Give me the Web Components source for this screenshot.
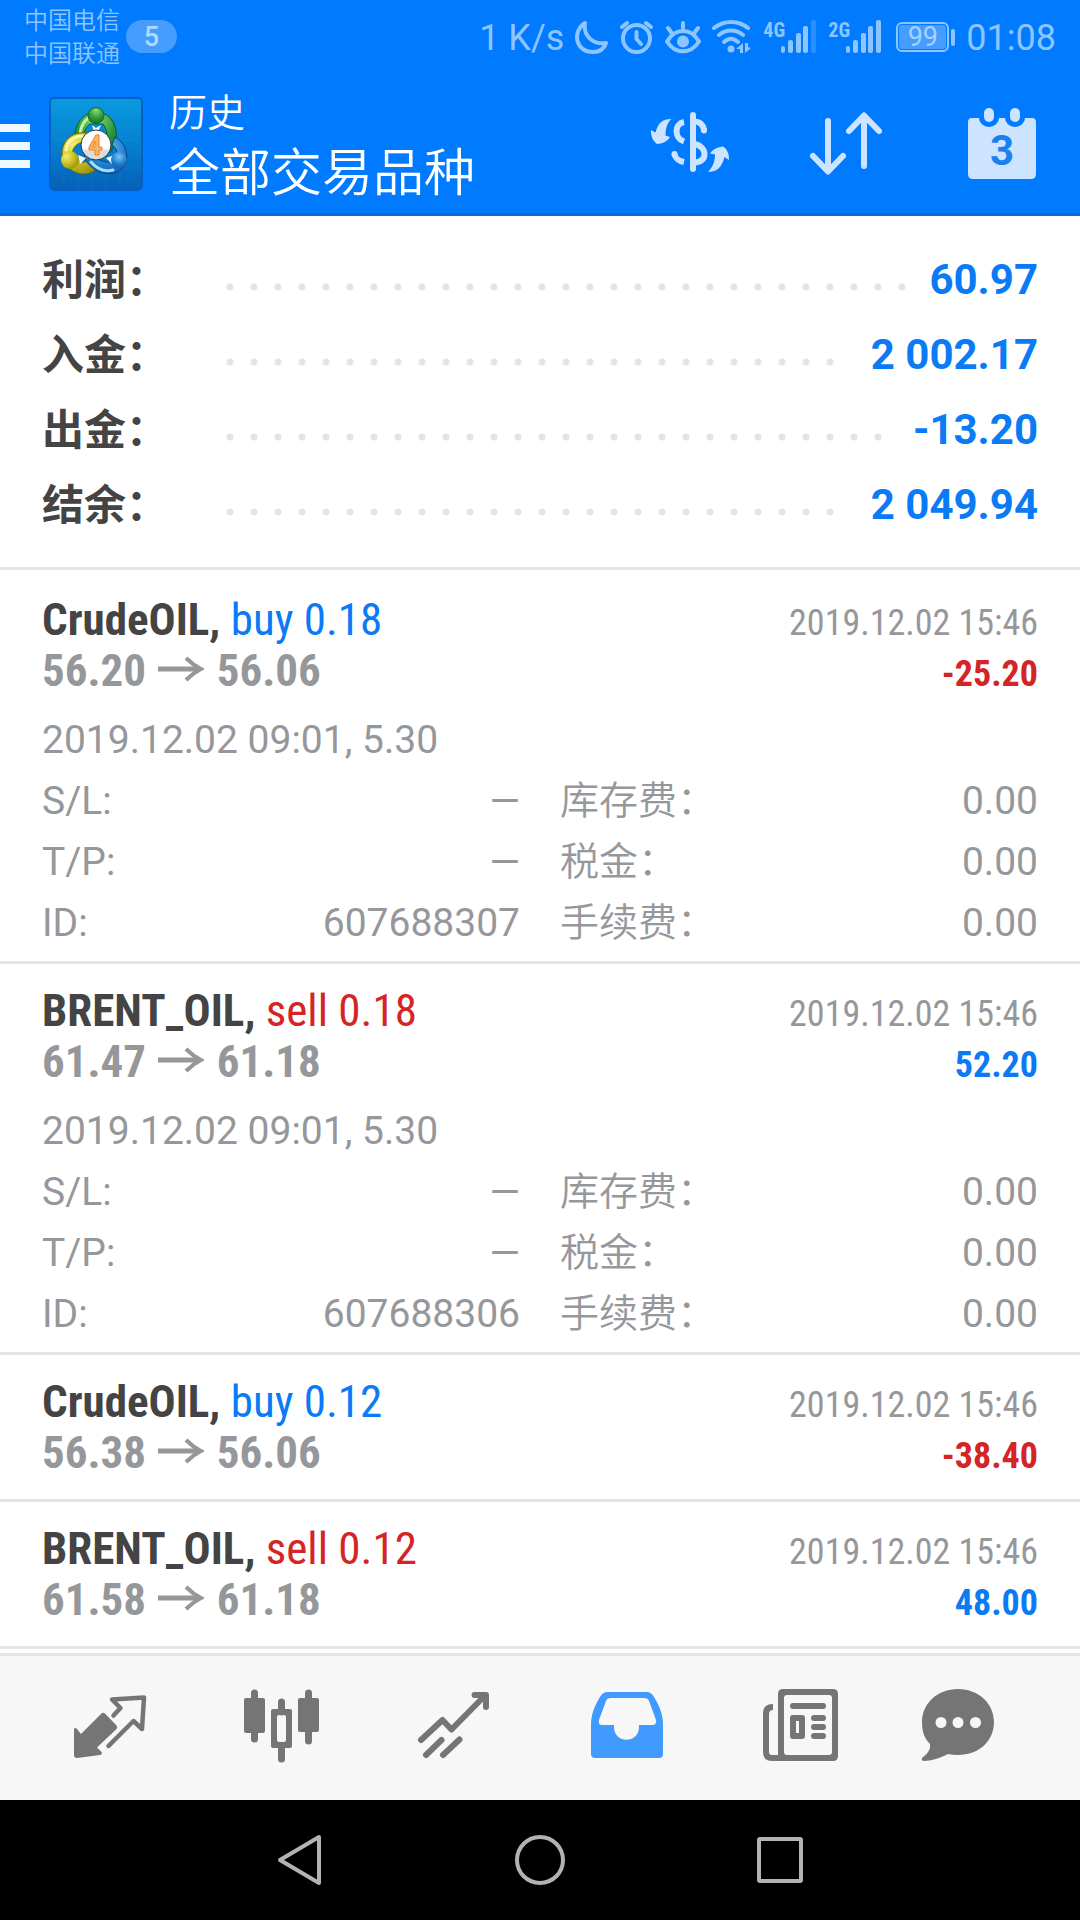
<!DOCTYPE html>
<html lang="zh-CN">
<head>
<meta charset="utf-8">
<meta name="viewport" content="width=device-width, initial-scale=1">
<title>历史</title>
<style>
  body {
    margin: 0;
    background: #fff;
    font-family: Roboto, "Noto Sans CJK SC", sans-serif;
    --blue: #007aff;
    --ink: #444;
    --muted: #96979b;
    --rule: #e4e4e4;
    --profit: #0a7af5;
    --loss: #d42426;
    --narrow: "Roboto Condensed", "Liberation Sans Narrow", Roboto, sans-serif;
  }
</style>
</head>
<body>
<history-app></history-app>

<script>
function define(name, html, setup) {
  const template = document.createElement('template');
  template.innerHTML = html;
  customElements.define(name, class extends HTMLElement {
    connectedCallback() {
      if (this.shadowRoot) return;
      const root = this.attachShadow({ mode: 'open' });
      root.append(template.content.cloneNode(true));
      if (setup) setup(this, root);
    }
  });
}

/* Copies attributes of the host into the elements marked with data-bind. */
function bind(host, root) {
  root.querySelectorAll('[data-bind]').forEach(el => {
    el.textContent = host.getAttribute(el.dataset.bind) || '';
  });
}

define('signal-meter', `
  <style>
    :host { display: flex; align-items: flex-start; color: inherit; }
    span { font: 700 20px/20px var(--narrow); width: 18px; }
    svg { display: block; width: 36px; height: 34px; fill: currentColor; }
    :host([level="4"]) .last { opacity: .3; }
  </style>
  <span data-bind="net"></span>
  <svg viewBox="0 0 36 34" aria-hidden="true">
    <rect x="0" y="26" width="4" height="7" rx="2"/>
    <rect x="7" y="20" width="5" height="13" rx="2"/>
    <rect x="15" y="13" width="5" height="20" rx="2"/>
    <rect x="22" y="6" width="5" height="27" rx="2"/>
    <rect class="last" x="30" y="0" width="5" height="33" rx="2"/>
  </svg>
`, bind);

define('battery-level', `
  <style>
    :host { display: flex; align-items: center; gap: 2px; }
    .case { display: flex; border: 2px solid currentColor; border-radius: 6px; padding: 1px; }
    .fill { width: 47px; height: 24px; border-radius: 3px; background: rgba(255,255,255,.27);
            font-size: 27px; line-height: 25px; text-align: center; color: #a6d2ff; }
    .nub { width: 4px; height: 17px; border-radius: 2px; background: currentColor; }
  </style>
  <span class="case"><span class="fill"><slot></slot></span></span><span class="nub"></span>
`);

define('status-bar', `
  <style>
    :host { display: flex; justify-content: space-between; height: 75px; padding: 0 24px;
            box-sizing: border-box; color: #8cc5ff; }
    .carriers { display: flex; gap: 6px; align-items: flex-start; }
    .names { font-size: 24px; line-height: 33px; padding-top: 5px; font-weight: 350; }
    .names div { white-space: nowrap; }
    .count { margin-top: 20px; width: 51px; height: 33px; border-radius: 17px; background: rgba(255,255,255,.27);
             font-size: 27px; line-height: 34px; font-weight: 500; text-align: center; color: #b3d8ff; }
    .right { display: flex; gap: 11px; align-items: flex-start; padding-top: 20px; }
    .big { font-size: 36px; line-height: 36px; white-space: nowrap; }
    svg { display: block; height: 34px; fill: none; stroke: currentColor; stroke-width: 4; stroke-linecap: round; stroke-linejoin: round; }
    battery-level { margin: 2px 0 0 3px; }
  </style>
  <div class="carriers">
    <div class="names"><div>中国电信</div><div>中国联通</div></div>
    <div class="count">5</div>
  </div>
  <div class="right">
    <span class="big">1 K/s</span>
    <svg width="34" viewBox="577 19 34 34" aria-hidden="true"><path d="M587 22C574 30 577 51 595 51C601 51 606 48 608 42C595 44 585 35 587 22Z"/></svg>
    <svg width="34" viewBox="622 19 34 34" aria-hidden="true"><circle cx="638.500" cy="37.500" r="13.500"/><path d="M638.500 31V38L643 43M624 26L629 22M648 22L653 26"/></svg>
    <svg width="36" viewBox="667 19 36 34" aria-hidden="true"><path d="M669 40.500C677 26.500 693 26.500 701 40.500C693 53.500 677 53.500 669 40.500ZM685 22V27M670 27L673 31M700 27L697 31"/><circle cx="685" cy="40.500" r="6" fill="currentColor" stroke="none"/></svg>
    <svg width="40" viewBox="713 19 40 34" aria-hidden="true"><path d="M715 27C725 19 739 19 749 27M720 34C727 28 737 28 744 34M725 41C730 36.500 734 36.500 739 41"/><g fill="currentColor" stroke="none"><circle cx="732" cy="48" r="3.500"/><path d="M737 48L744 42V52H741V48ZM746 42H749V46L752 47L746 52Z"/></g></svg>
    <signal-meter net="4G" level="4"></signal-meter>
    <signal-meter net="2G" level="5"></signal-meter>
    <battery-level>99</battery-level>
    <span class="big">01:08</span>
  </div>
`);

define('app-logo', `
  <style>:host { display: block; } svg { display: block; width: 94px; height: 94px; }</style>
  <svg viewBox="49 97 94 94" role="img" aria-label="MetaTrader 4">
    <defs>
      <linearGradient id="bg" x1="0" y1="0" x2="0" y2="1"><stop offset="0" stop-color="#0a9ae0"/><stop offset=".5" stop-color="#0580cf"/><stop offset="1" stop-color="#0560b8"/></linearGradient>
      <radialGradient id="g" cx=".5" cy=".2" r=".9"><stop offset="0" stop-color="#8fd67a"/><stop offset=".5" stop-color="#2f9b3c"/><stop offset="1" stop-color="#0d6a28"/></radialGradient>
      <radialGradient id="y" cx=".3" cy=".3" r=".9"><stop offset="0" stop-color="#f4ee70"/><stop offset=".5" stop-color="#c6bd1e"/><stop offset="1" stop-color="#82850c"/></radialGradient>
      <radialGradient id="b" cx=".5" cy=".3" r=".9"><stop offset="0" stop-color="#7cc6f2"/><stop offset=".5" stop-color="#1f7fcd"/><stop offset="1" stop-color="#0a4a98"/></radialGradient>
      <linearGradient id="w" x1="0" y1="0" x2="0" y2="1"><stop offset=".6" stop-color="#fff"/><stop offset=".7" stop-color="#dcdcdc"/></linearGradient>
    </defs>
    <rect x="50" y="98" width="92" height="92" rx="4" fill="url(#bg)" stroke="#0660c4" stroke-width="2"/>
    <path d="M64 98V190M78 98V190M92 98V190M106 98V190M120 98V190M50 112H142M50 126H142M50 140H142M50 154H142M50 168H142" stroke="#2aa6ea" stroke-width="1" opacity=".16"/>
    <path d="M75 141C73 124 84 112 96 112C109 112 118 124 116 140C114 149 110 153 104 156L101 148C108 142 109 132 103 124H90C84 128 83 136 86 142Z" fill="url(#g)" stroke="#0c5a26" stroke-width="1"/>
    <path d="M80 137C80 126 85 119 91 117" fill="none" stroke="#c3efa6" stroke-width="3" stroke-linecap="round"/>
    <path d="M87 133C74 131 63 139 62 152C62 166 74 175 86 174C93 173 98 169 101 163L92 158C88 164 78 163 73 157C71 150 75 143 84 142Z" fill="url(#y)" stroke="#66690c" stroke-width="1"/>
    <path d="M66 150C67 142 73 137 82 136" fill="none" stroke="#fbf7a0" stroke-width="3" stroke-linecap="round"/>
    <path d="M115 137C124 142 129 152 126 163C122 173 112 175 104 173C94 171 86 164 84 155L94 156C99 162 109 164 115 160C119 155 117 148 112 145Z" fill="url(#b)" stroke="#0a458c" stroke-width="1"/>
    <path d="M91 162C97 169 105 172 113 170" fill="none" stroke="#a6dcfa" stroke-width="3" stroke-linecap="round"/>
    <path d="M92 125L96 128L101 125L98 132H94Z M78 155L86 158L80 164Z M106 158L114 155L112 164Z" fill="#f2fbff"/>
    <circle cx="96" cy="115.500" r="8" fill="url(#g)" stroke="#0d6a28"/>
    <circle cx="70" cy="160" r="9" fill="url(#y)"/>
    <circle cx="119" cy="160" r="8" fill="url(#b)"/>
    <circle cx="96" cy="145" r="15" fill="url(#w)" stroke="#273c4a" stroke-width="1"/>
    <path d="M96 135H99V147H102V150H99V155H95V150H89V147ZM95 141L92.500 147H95Z" fill="#f9b468" stroke="#f08018" stroke-width="1" stroke-linejoin="round"/>
  </svg>
`);

define('app-header', `
  <style>
    :host { display: flex; align-items: center; height: 141px; box-sizing: border-box;
            border-bottom: 3px solid #0a6bd6; color: #fff; }
    button { display: flex; align-items: center; justify-content: center; border: 0; padding: 0; background: none; color: #cce4ff; cursor: pointer; }
    .menu { width: 49px; justify-content: flex-start; padding-top: 4px; }
    .menu span { display: flex; flex-direction: column; gap: 10px; }
    .menu i { display: block; width: 30px; height: 8px; background: #f0f8ff; }
    .titles { flex: 1; margin: 0 0 0 26px; }
    h1, p { margin: 0; font-weight: 350; white-space: nowrap; }
    p { font-size: 38px; line-height: 60px; }
    h1 { font-size: 51px; line-height: 62px; }
    .action { width: 156px; height: 138px; }
    .action svg { display: block; width: 84px; height: 84px; fill: currentColor; }
  </style>
  <button class="menu" aria-label="菜单"><span><i></i><i></i><i></i></span></button>
  <app-logo></app-logo>
  <div class="titles"><p>历史</p><h1>全部交易品种</h1></div>
  <button class="action" aria-label="品种">
    <svg viewBox="648 102 84 84">
      <g fill="none" stroke="currentColor" stroke-width="6">
        <path d="M693 115V169" stroke-linecap="round"/>
        <path d="M684 122C674 124 674 138 684 141.500M684 162C679 161 675 158 674.500 154"/>
        <path d="M694 121.500C699 121.500 703 124 704 130M694 144C708 146 708 163 694 162.500"/>
        <path d="M674.500 154V154.500M704 130V130.500" stroke-linecap="round"/>
      </g>
      <path d="M671.500 119C662 119 658 123 655.500 132.500L651 130C650.500 137 654 142 657 144C662 143.500 667 142 670 137L665.500 135.500C665.500 129 667 123 671.500 119Z"/>
      <path d="M708 172C717 172 722 167 724.500 157L729 160C729.500 153 726 148 723 146.500C718 147 713 149 710 153.500L715 154.500C715 161 713 167 708 172Z"/>
    </svg>
  </button>
  <button class="action" aria-label="排序">
    <svg viewBox="804 102 84 84"><path d="M828 121V171M813 156L828 171.500L843 156M864 166V116M849 131L864 115.500L879 131" fill="none" stroke="currentColor" stroke-width="6" stroke-linecap="round" stroke-linejoin="round"/></svg>
  </button>
  <button class="action" aria-label="日期">
    <svg viewBox="960 102 84 84">
      <path d="M972 118H979A10 9 0 0 0 999 118H1005A10 9 0 0 0 1025 118H1032Q1036 118 1036 122V174Q1036 179 1031 179H973Q968 179 968 174V122Q968 118 972 118Z"/>
      <rect x="984" y="108" width="10" height="14" rx="5"/><rect x="1010" y="108" width="10" height="14" rx="5"/>
      <text x="1002" y="165" text-anchor="middle" font-family="Roboto, sans-serif" font-weight="700" font-size="42" fill="#1a80f0">3</text>
    </svg>
  </button>
`);

define('summary-row', `
  <style>
    :host { display: flex; align-items: center; height: 75px; font-size: 42px; line-height: 75px; font-weight: 700; white-space: nowrap; }
    .label { width: 184px; padding-top: 2px; color: var(--ink); }
    .dots { flex: 1; height: 8px; margin: 14px 22px 0 0;
            background: radial-gradient(circle at 4px 4px, var(--rule) 3px, transparent 4px) 0 0 / 24px 8px repeat-x; }
    .value { color: var(--profit); }
  </style>
  <span class="label" data-bind="label"></span><span class="dots"></span><span class="value"><slot></slot></span>
`, bind);

define('account-summary', `
  <style>:host { display: block; padding: 26px 42px 25px; border-bottom: 3px solid var(--rule); }</style>
  <slot></slot>
`);

define('deal-detail', `
  <style>
    :host { display: flex; justify-content: space-between; height: 61px; line-height: 61px; white-space: nowrap; }
    .label { font-weight: 350; }
    :host([latin]) .label { font-weight: 400; }
  </style>
  <span class="label" data-bind="label"></span><span><slot></slot></span>
`, bind);

define('deal-item', `
  <style>
    :host { display: block; padding: 21px 42px; border-bottom: 3px solid var(--rule); color: var(--muted); }
    :host([expanded]) { padding-bottom: 7px; }
    .line { display: flex; justify-content: space-between; align-items: baseline; height: 51px; line-height: 51px;
            font-family: var(--narrow); font-size: 45px; white-space: nowrap; }
    .symbol { color: var(--ink); }
    b { font-weight: 700; }
    .side { color: var(--profit); }
    :host([side="sell"]) .side { color: var(--loss); }
    .arrow { width: 46px; height: 26px; margin: 0 2px; vertical-align: 4px; fill: none; stroke: currentColor; stroke-width: 5; }
    .date, .profit { font-size: 36px; }
    .profit { color: var(--profit); }
    .profit.minus { color: var(--loss); }
    .more { display: none; font-size: 39px; margin-top: 14px; }
    :host([expanded]) .more { display: block; }
    .opened { line-height: 61px; height: 61px; }
    .grid { display: grid; grid-template-columns: 1fr 1fr; column-gap: 40px; }
  </style>
  <div class="line">
    <span><b class="symbol"></b> <span class="side"></span></span>
    <span class="date" data-bind="closed"></span>
  </div>
  <div class="line">
    <b><span data-bind="from"></span> <svg class="arrow" viewBox="0 0 46 26" role="img" aria-label="→"><path d="M0 13H42"/><path stroke-width="4" d="M28 2Q35 9 43 13Q35 17 28 24"/></svg> <span data-bind="to"></span></b>
    <b class="profit" data-bind="profit"></b>
  </div>
  <div class="more">
    <div class="opened" data-bind="opened"></div>
    <div class="grid"><slot></slot></div>
  </div>
`, (host, root) => {
  bind(host, root);
  root.querySelector('.symbol').textContent = host.getAttribute('symbol') + ',';
  root.querySelector('.side').textContent = host.getAttribute('side') + ' ' + host.getAttribute('volume');
  root.querySelector('.profit').classList.toggle('minus', host.getAttribute('profit').startsWith('-'));
});

define('tab-bar', `
  <style>
    :host { display: block; background: #f7f7f7; border-top: 3px solid var(--rule); }
    nav { display: flex; height: 144px; padding: 0 20px 0 24px; color: #757575; }
    a { flex: 1; display: flex; align-items: center; justify-content: center; color: inherit; }
    a[aria-current] { color: #419bff; }
    svg { display: block; width: 120px; height: 90px; fill: currentColor; }
    .line { fill: none; stroke: currentColor; stroke-linecap: round; stroke-linejoin: round; }
  </style>
  <nav>
    <a href="#quotes" aria-label="行情"><svg viewBox="50 1683 120 90">
      <path d="M74 1729.500Q75 1727 77 1729L81 1734L101.500 1713.500Q103 1712 105 1713.500L116.500 1725.500Q118 1727 116.500 1729L97 1747.500L101.500 1752Q103 1754 100 1755L77 1758Q74 1758 74 1755Z"/>
      <path class="line" stroke-width="4.500" stroke-linejoin="miter" d="M113.500 1715.500L120.500 1708L112 1699.500L144 1697.500L142 1729L133.500 1721L108.500 1746"/>
    </svg></a>
    <a href="#charts" aria-label="图表"><svg viewBox="223 1683 120 90">
      <path class="line" stroke-width="7" d="M254.500 1693V1739M281.500 1702V1712M281.500 1746V1759M308.500 1693V1741"/>
      <rect x="244" y="1698" width="21" height="35" rx="2"/><rect x="298" y="1698" width="21" height="34" rx="2"/>
      <path fill-rule="evenodd" d="M273 1709H290Q292 1709 292 1711V1746Q292 1748 290 1748H273Q271 1748 271 1746V1711Q271 1709 273 1709ZM279 1715Q277 1715 277 1717V1740Q277 1742 279 1742H284Q286 1742 286 1740V1717Q286 1715 284 1715Z"/>
    </svg></a>
    <a href="#trade" aria-label="交易"><svg viewBox="396 1683 120 90">
      <path class="line" stroke-width="6" d="M421 1740L442.500 1720L451.500 1729.500L484.500 1696M474.500 1695H486V1707"/>
      <path class="line" stroke-width="6" d="M426 1755L441.500 1740M443 1755L459.500 1739.500"/>
    </svg></a>
    <a href="#history" aria-label="历史" aria-current="page"><svg viewBox="568 1683 120 90">
      <path fill-rule="evenodd" d="M607 1692H647Q651 1692 654 1697C660 1706 663 1716 663 1724V1754Q663 1758 659 1758H595Q591 1758 591 1754V1724C591 1716 594 1706 600 1697Q603 1692 607 1692ZM611 1698Q607 1698 606 1701L599 1720Q598 1725 602 1725H614V1727C614 1744 639 1744 639 1727V1725H652Q657 1725 656 1720L649 1701Q648 1698 644 1698Z"/>
    </svg></a>
    <a href="#news" aria-label="新闻"><svg viewBox="741 1683 120 90">
      <path fill-rule="evenodd" d="M783 1689H833Q838 1689 838 1694V1756Q838 1761 833 1761H772Q763 1761 763 1752V1713Q763 1704 773 1704V1710Q769 1710 769 1714V1752Q769 1755 772 1755H778V1694Q778 1689 783 1689ZM787 1695Q784 1695 784 1698V1752Q784 1755 787 1755H829Q832 1755 832 1752V1698Q832 1695 829 1695Z"/>
      <path fill-rule="evenodd" d="M793 1715H802Q805 1715 805 1718V1736Q805 1739 802 1739H793Q790 1739 790 1736V1718Q790 1715 793 1715ZM796 1721V1733H799V1721Z"/>
      <path class="line" stroke-width="6" d="M793 1706H823M814 1718H823M814 1727H823M814 1736H823"/>
    </svg></a>
    <a href="#chat" aria-label="聊天"><svg viewBox="914 1683 120 90">
      <path fill-rule="evenodd" d="M958 1689C979 1689 994 1704 994 1722C994 1741 979 1755 958 1755Q952 1755 948 1754C940 1758 932 1761 923 1761Q921 1760 922 1758C927 1754 931 1750 930 1744C924 1738 922 1731 922 1722C922 1704 937 1689 958 1689ZM941 1717A5.500 5.500 0 1 0 941 1728A5.500 5.500 0 1 0 941 1717ZM958 1717A5.500 5.500 0 1 0 958 1728A5.500 5.500 0 1 0 958 1717ZM975.500 1717A5.500 5.500 0 1 0 975.500 1728A5.500 5.500 0 1 0 975.500 1717Z"/>
    </svg></a>
  </nav>
`);

define('system-nav', `
  <style>
    :host { display: flex; height: 120px; padding: 0 16.66%; background: #000; }
    button { flex: 1; display: flex; align-items: center; justify-content: center; border: 0; padding: 0; background: none; color: #b3b3b3; }
    svg { display: block; width: 60px; height: 60px; fill: none; stroke: currentColor; stroke-width: 4; stroke-linejoin: round; }
  </style>
  <button aria-label="返回"><svg viewBox="0 0 60 60"><path d="M49 7V53L10 30Z"/></svg></button>
  <button aria-label="主页"><svg viewBox="0 0 60 60"><circle cx="30" cy="30" r="23"/></svg></button>
  <button aria-label="最近"><svg viewBox="0 0 60 60"><rect x="9" y="9" width="42" height="42" rx="1"/></svg></button>
`);

define('history-app', `
  <style>
    :host { display: flex; flex-direction: column; min-height: 100vh; }
    header { background: var(--blue); }
    main { flex: 1; }
    .deals { padding-top: 3px; }
  </style>
  <header>
    <status-bar></status-bar>
    <app-header></app-header>
  </header>
  <main>
    <account-summary>
      <summary-row label="利润：">60.97</summary-row>
      <summary-row label="入金：">2 002.17</summary-row>
      <summary-row label="出金：">-13.20</summary-row>
      <summary-row label="结余：">2 049.94</summary-row>
    </account-summary>
    <div class="deals">
      <deal-item expanded symbol="CrudeOIL" side="buy" volume="0.18" from="56.20" to="56.06" closed="2019.12.02 15:46" profit="-25.20" opened="2019.12.02 09:01, 5.30">
        <deal-detail latin label="S/L:">—</deal-detail><deal-detail label="库存费：">0.00</deal-detail>
        <deal-detail latin label="T/P:">—</deal-detail><deal-detail label="税金：">0.00</deal-detail>
        <deal-detail latin label="ID:">607688307</deal-detail><deal-detail label="手续费：">0.00</deal-detail>
      </deal-item>
      <deal-item expanded symbol="BRENT_OIL" side="sell" volume="0.18" from="61.47" to="61.18" closed="2019.12.02 15:46" profit="52.20" opened="2019.12.02 09:01, 5.30">
        <deal-detail latin label="S/L:">—</deal-detail><deal-detail label="库存费：">0.00</deal-detail>
        <deal-detail latin label="T/P:">—</deal-detail><deal-detail label="税金：">0.00</deal-detail>
        <deal-detail latin label="ID:">607688306</deal-detail><deal-detail label="手续费：">0.00</deal-detail>
      </deal-item>
      <deal-item symbol="CrudeOIL" side="buy" volume="0.12" from="56.38" to="56.06" closed="2019.12.02 15:46" profit="-38.40"></deal-item>
      <deal-item symbol="BRENT_OIL" side="sell" volume="0.12" from="61.58" to="61.18" closed="2019.12.02 15:46" profit="48.00"></deal-item>
    </div>
  </main>
  <tab-bar></tab-bar>
  <system-nav></system-nav>
`);
</script>
</body>
</html>
